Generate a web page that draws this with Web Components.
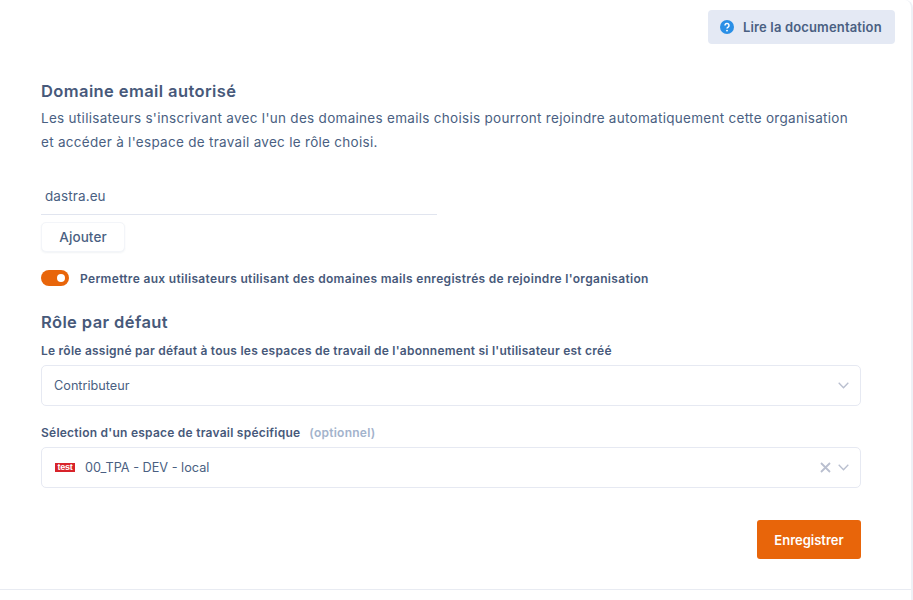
<!DOCTYPE html>
<html lang="fr">
<head>
<meta charset="utf-8">
<title>Domaine email autorisé</title>
<style>
  html, body { margin: 0; height: 100%; background: #fff; overflow: hidden; }
  body { font-family: "Inter", "Liberation Sans", sans-serif; color: #4a5f82; }
</style>
</head>
<body>
<settings-panel>
  <doc-button slot="top">Lire la documentation</doc-button>

  <h-title>Domaine email autorisé</h-title>
  <p-text>Les utilisateurs s'inscrivant avec l'un des domaines emails choisis pourront rejoindre automatiquement cette organisation et accéder à l'espace de travail avec le rôle choisi.</p-text>
  <domain-input value="dastra.eu"></domain-input>
  <ghost-button>Ajouter</ghost-button>
  <toggle-row>Permettre aux utilisateurs utilisant des domaines mails enregistrés de rejoindre l'organisation</toggle-row>

  <h-title class="second">Rôle par défaut</h-title>
  <field-select class="first" label="Le rôle assigné par défaut à tous les espaces de travail de l'abonnement si l'utilisateur est créé" value="Contributeur"></field-select>
  <field-select label="Sélection d'un espace de travail spécifique" hint="(optionnel)" value="00_TPA - DEV - local" flag clearable></field-select>

  <save-button>Enregistrer</save-button>
</settings-panel>

<script>
'use strict';

// petit helper pour les composants statiques
function shadow(el, html) {
  el.attachShadow({ mode: 'open' }).innerHTML = html;
}

class SettingsPanel extends HTMLElement {
  constructor() {
    super();
    shadow(this, `
      <style>
        :host {
          display: block; box-sizing: border-box; width: 913px; height: 600px;
          background: #fff; border-right: 2px solid #eef1f6;
          border-top-right-radius: 8px;
        }
        .inner { box-sizing: border-box; height: 590px; border-bottom: 1px solid #e8ebf2; }
        .top { display: flex; justify-content: flex-end; padding: 10px 16px 0 0; }
        .body { padding: 35px 50px 0 41px; display: flex; flex-direction: column; }
      </style>
      <div class="inner">
        <div class="top"><slot name="top"></slot></div>
        <div class="body"><slot></slot></div>
      </div>
    `);
  }
}

class DocButton extends HTMLElement {
  constructor() {
    super();
    shadow(this, `
      <style>
        :host {
          display: flex; align-items: center; gap: 9px; box-sizing: border-box;
          width: 187px; height: 34px; padding-left: 12px;
          background: #e4e9f4; border-radius: 4px;
          font-size: 13px; letter-spacing: .15px; font-weight: 600; color: #4a5f82; white-space: nowrap;
        }
        svg { width: 14px; height: 14px; flex: none; }
      </style>
      <svg viewBox="0 0 14 14">
        <circle cx="7" cy="7" r="7" fill="#2a8fe6"/>
        <path d="M5 5.4a2 2 0 1 1 3.1 1.7c-.7.45-1.1.8-1.1 1.5" fill="none" stroke="#fff" stroke-width="1.5"/>
        <circle cx="7" cy="10.6" r=".95" fill="#fff"/>
      </svg>
      <slot></slot>
    `);
  }
}

class HTitle extends HTMLElement {
  constructor() {
    super();
    shadow(this, `
      <style>
        :host { display: block; font-size: 16.5px; letter-spacing: .4px; line-height: 24px; font-weight: 600; color: #47597a; }
        :host(.second) { margin-top: 23px; }
      </style>
      <slot></slot>
    `);
  }
}

class PText extends HTMLElement {
  constructor() {
    super();
    shadow(this, `
      <style>
        :host { display: block; margin-top: 3px; width: 815px; font-size: 13.5px; letter-spacing: .29px; line-height: 24px; color: #4a5f82; }
      </style>
      <slot></slot>
    `);
  }
}

class DomainInput extends HTMLElement {
  constructor() {
    super();
    shadow(this, `
      <style>
        :host {
          display: block; box-sizing: border-box; width: 396px; height: 37px; margin-top: 24px;
          padding: 0 4px; border-bottom: 1px solid #e1e5ef;
          font-size: 13.5px; letter-spacing: .1px; line-height: 36px; color: #4a5f82;
        }
      </style>
      <span>${this.getAttribute('value')}</span>
    `);
  }
}

class GhostButton extends HTMLElement {
  constructor() {
    super();
    shadow(this, `
      <style>
        :host {
          display: flex; align-items: center; justify-content: center; box-sizing: border-box;
          width: 84px; height: 30px; margin-top: 7px;
          background: #fff; border: 1px solid #f3f5f9; border-radius: 5px;
          box-shadow: 0 1px 2px rgba(60,80,120,.07);
          font-size: 13.5px; letter-spacing: .1px; font-weight: 500; color: #4a5f82;
        }
      </style>
      <slot></slot>
    `);
  }
}

class ToggleRow extends HTMLElement {
  constructor() {
    super();
    shadow(this, `
      <style>
        :host {
          display: flex; align-items: center; gap: 11px; margin-top: 17px; height: 18px;
          font-size: 12px; letter-spacing: .32px; font-weight: 600; color: #47597a; white-space: nowrap;
        }
        .track {
          display: flex; align-items: center; justify-content: flex-end; flex: none;
          box-sizing: border-box; width: 28px; height: 16px; padding-right: 4px;
          background: #e8650a; border-radius: 8px;
        }
        .knob { width: 8px; height: 8px; background: #fff; border-radius: 50%; }
      </style>
      <span class="track"><span class="knob"></span></span>
      <slot></slot>
    `);
  }
}

class FieldSelect extends HTMLElement {
  constructor() {
    super();
    const hint = this.getAttribute('hint');
    const flag = this.hasAttribute('flag');
    const clearable = this.hasAttribute('clearable');
    shadow(this, `
      <style>
        :host { display: block; margin-top: 18px; }
        :host(.first) { margin-top: 8px; }
        .label { font-size: 12px; letter-spacing: .24px; line-height: 18px; font-weight: 600; color: #47597a; white-space: nowrap; }
        .hint { margin-left: 9px; color: #a3b3cc; }
        .box {
          display: flex; align-items: center; gap: 10px; box-sizing: border-box;
          width: 820px; height: 41px; margin-top: 5px; padding: 0 11px 0 12px;
          border: 1px solid #e6e9f2; border-radius: 5px; background: #fff;
          font-size: 12.7px; color: #4a5f82;
        }
        .value { flex: 1; }
        .flag {
          flex: none; width: 20px; height: 9px; margin-left: 1px; background: #d8232a; color: #fff;
          font: 700 9px/9px "Liberation Sans", sans-serif; text-align: center; letter-spacing: -.2px;
        }
        svg { flex: none; display: block; }
        .icons { display: flex; align-items: center; gap: 7px; }
      </style>
      <div class="label">${this.getAttribute('label')}${hint ? `<span class="hint">${hint}</span>` : ''}</div>
      <div class="box">
        ${flag ? '<span class="flag">test</span>' : ''}
        <span class="value">${this.getAttribute('value')}</span>
        <span class="icons">
          ${clearable ? `<svg width="11" height="11" viewBox="0 0 11 11"><path d="M1 1l9 9M10 1l-9 9" stroke="#b9bfcf" stroke-width="1.8" fill="none"/></svg>` : ''}
          <svg width="11" height="7" viewBox="0 0 11 7"><path d="M.7.8l4.8 5 4.8-5" stroke="#b9bfcf" stroke-width="1.3" fill="none"/></svg>
        </span>
      </div>
    `);
  }
}

class SaveButton extends HTMLElement {
  constructor() {
    super();
    shadow(this, `
      <style>
        :host {
          display: flex; align-items: center; justify-content: center; box-sizing: border-box;
          width: 104px; height: 39px; margin: 32px 0 0 716px;
          background: #e8650a; border-radius: 3px;
          font-size: 13px; font-weight: 600; color: #fff;
        }
      </style>
      <slot></slot>
    `);
  }
}

customElements.define('settings-panel', SettingsPanel);
customElements.define('doc-button', DocButton);
customElements.define('h-title', HTitle);
customElements.define('p-text', PText);
customElements.define('domain-input', DomainInput);
customElements.define('ghost-button', GhostButton);
customElements.define('toggle-row', ToggleRow);
customElements.define('field-select', FieldSelect);
customElements.define('save-button', SaveButton);
</script>
</body>
</html>
